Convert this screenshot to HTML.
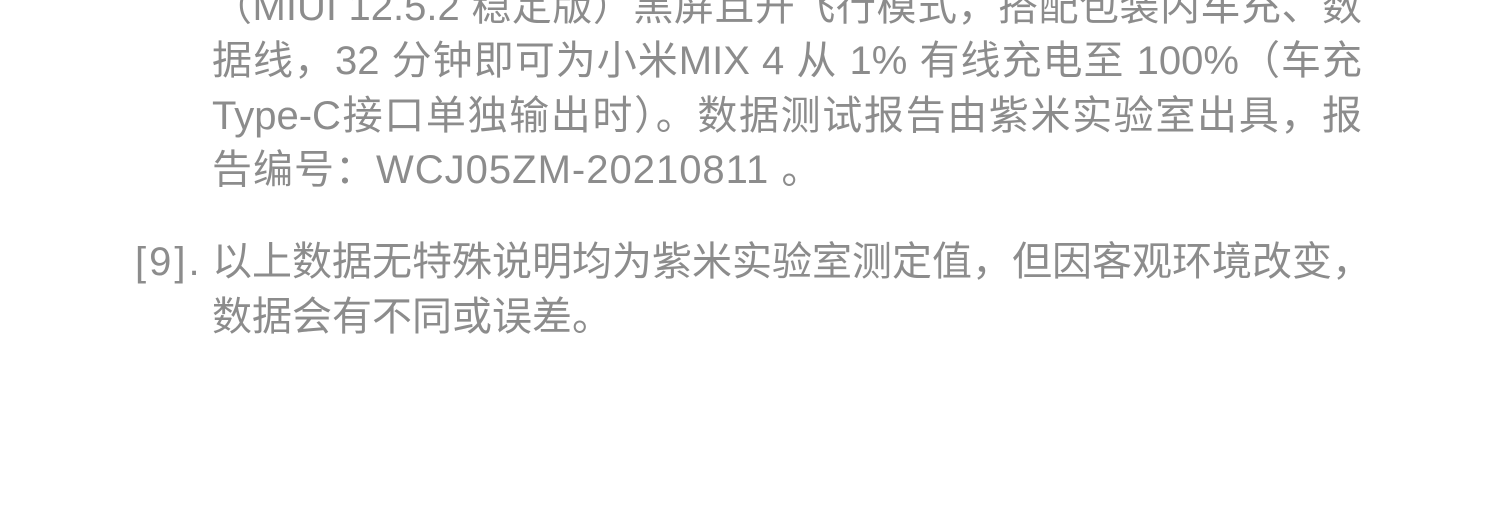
<!DOCTYPE html>
<html><head><meta charset="utf-8"><style>
html,body{margin:0;padding:0;background:#fff;width:1500px;height:521px;overflow:hidden;position:relative}
.l{position:absolute;left:212px;width:1150px;height:54px;line-height:54px;font-family:"Liberation Sans","Noto Sans CJK SC",sans-serif;font-size:40px;color:#8c8c8c;white-space:nowrap;text-align:justify;text-align-last:justify}
.n{text-align:left;text-align-last:left}
.m{position:absolute;left:135px;top:235px;line-height:54px;font-family:"Liberation Sans",sans-serif;font-size:40px;letter-spacing:3px;color:#8c8c8c}
</style></head><body>
<div class="l" style="top:-20px">（MIUI 12.5.2 稳定版）黑屏且开飞行模式，搭配包装内车充、数</div>
<div class="l" style="top:34px">据线，32 分钟即可为小米MIX 4 从 1% 有线充电至 100%（车充</div>
<div class="l" style="top:89px">Type-C接口单独输出时）。数据测试报告由紫米实验室出具，报</div>
<div class="l n" style="top:143px;letter-spacing:1px">告编号：WCJ05ZM-20210811 。</div>
<div class="m">[9].</div>
<div class="l" style="top:235px">以上数据无特殊说明均为紫米实验室测定值，但因客观环境改变，</div>
<div class="l n" style="top:290px">数据会有不同或误差。</div>
</body></html>
